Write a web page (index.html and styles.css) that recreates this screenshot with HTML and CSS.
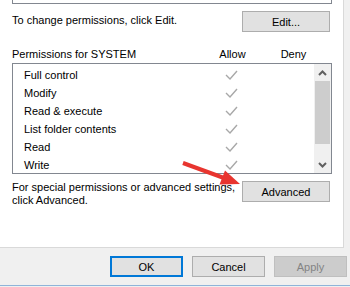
FILE: index.html
```html
<!DOCTYPE html>
<html>
<head>
  <title>Permissions</title>
  <link rel="stylesheet" href="styles.css">
</head>
<body>

<div class="panel">
  <div class="prev-box"></div>

  <div class="edit-row">
    <span>To change permissions, click Edit.</span>
    <button class="btn" type="button">Edit...</button>
  </div>

  <div class="perm-head">
    <span class="perm-title">Permissions for SYSTEM</span>
    <span class="col">Allow</span>
    <span class="col">Deny</span>
  </div>

  <div class="listbox">
    <ul class="perms">
      <li><span class="perm-name">Full control</span><span class="col"><svg class="check" width="13" height="10" viewBox="0 0 13 10"><polyline points="1,5 5,9 12,1"/></svg></span></li>
      <li><span class="perm-name">Modify</span><span class="col"><svg class="check" width="13" height="10" viewBox="0 0 13 10"><polyline points="1,5 5,9 12,1"/></svg></span></li>
      <li><span class="perm-name">Read &amp; execute</span><span class="col"><svg class="check" width="13" height="10" viewBox="0 0 13 10"><polyline points="1,5 5,9 12,1"/></svg></span></li>
      <li><span class="perm-name">List folder contents</span><span class="col"><svg class="check" width="13" height="10" viewBox="0 0 13 10"><polyline points="1,5 5,9 12,1"/></svg></span></li>
      <li><span class="perm-name">Read</span><span class="col"><svg class="check" width="13" height="10" viewBox="0 0 13 10"><polyline points="1,5 5,9 12,1"/></svg></span></li>
      <li><span class="perm-name">Write</span><span class="col"><svg class="check" width="13" height="10" viewBox="0 0 13 10"><polyline points="1,5 5,9 12,1"/></svg></span></li>
    </ul>
    <div class="scrollbar">
      <div class="arrow"><svg width="9" height="6" viewBox="0 0 9 6"><polyline points="1,5 4.5,1.5 8,5"/></svg></div>
      <div class="thumb"></div>
      <div class="track"></div>
      <div class="arrow"><svg width="9" height="6" viewBox="0 0 9 6"><polyline points="1,1 4.5,4.5 8,1"/></svg></div>
    </div>
  </div>

  <div class="adv-row">
    <p class="note">For special permissions or advanced settings,<br>click Advanced.</p>
    <button class="btn" type="button">Advanced</button>
  </div>

  <!-- red pointer over the list -->
  <svg class="pointer" width="350" height="200" viewBox="0 0 350 200">
    <line x1="183" y1="163" x2="224" y2="178"/>
    <polygon points="240,184 219.5,184.5 225,170.5"/>
  </svg>
</div>

<div class="footer">
  <button class="btn btn-default" type="button">OK</button>
  <button class="btn" type="button">Cancel</button>
  <button class="btn btn-disabled" type="button">Apply</button>
</div>

<div class="bottom-line"></div>

</body>
</html>
```

FILE: styles.css
```css
* {
  box-sizing: border-box;
}
body {
  margin: 0;
  background-color: #f0f0f0;
  font-family: "Liberation Sans", Arial, sans-serif;
  font-size: 11px;
  color: #000;
}

/* Tab page */
.panel {
  position: relative;
  width: 344px;
  height: 248px;
  padding-left: 12px;
  background-color: #fff;
  border-right: 1px solid #d9d9d9;
  border-bottom: 1px solid #d9d9d9;
}
.prev-box {
  width: 320px;
  height: 4px;
  border: 1px solid #828790;
  border-top: 0;
}

.btn {
  width: 88px;
  height: 21px;
  padding: 0;
  font-family: inherit;
  font-size: 11px;
  color: #000;
  background-color: #e1e1e1;
  border: 1px solid #adadad;
}

.edit-row {
  display: flex;
  justify-content: space-between;
  align-items: flex-start;
  width: 318px;
  margin-top: 7px;
}
.edit-row span {
  padding-top: 3px;
}

.perm-head {
  display: flex;
  margin-top: 15px;
  height: 14px;
  line-height: 14px;
}
.perm-title {
  width: 190px;
}
.col {
  width: 61px;
  text-align: center;
  display: flex;
  justify-content: center;
  align-items: center;
}

/* List box */
.listbox {
  display: flex;
  width: 320px;
  height: 111px;
  margin-top: 2px;
  border: 1px solid #828790;
}
.perms {
  flex: 1;
  list-style: none;
  margin: 0;
  padding: 2px 0 0 11px;
  overflow: hidden;
}
.perms li {
  display: flex;
  height: 18px;
  align-items: center;
}
.perm-name {
  width: 177px;
}
.check polyline {
  fill: none;
  stroke: #a8a8a8;
  stroke-width: 1.4;
}
.scrollbar {
  width: 17px;
  display: flex;
  flex-direction: column;
  background-color: #f0f0f0;
}
.arrow {
  height: 17px;
  display: flex;
  justify-content: center;
  align-items: center;
}
.arrow polyline {
  fill: none;
  stroke: #606060;
  stroke-width: 2;
}
.thumb {
  height: 63px;
  margin: 0 1px;
  background-color: #cdcdcd;
}
.track {
  flex: 1;
}

.adv-row {
  display: flex;
  justify-content: space-between;
  align-items: flex-start;
  width: 318px;
  margin-top: 7px;
}
.note {
  margin: 0;
  padding-top: 0;
  line-height: 13px;
}

.pointer {
  position: absolute;
  left: 0;
  top: 0;
  pointer-events: none;
}
.pointer line {
  stroke: #e8352f;
  stroke-width: 4;
}
.pointer polygon {
  fill: #e8352f;
}

/* Dialog buttons */
.footer {
  display: flex;
  gap: 9px;
  padding: 8px 0 0 110px;
}
.footer .btn {
  width: 73px;
}
.btn-default {
  border: 2px solid #0078d7;
}
.btn-disabled {
  background-color: #cccccc;
  border-color: #bfbfbf;
  color: #838383;
}
.bottom-line {
  margin-top: 8px;
  height: 1px;
  background-color: #8fb4d9;
}
```
